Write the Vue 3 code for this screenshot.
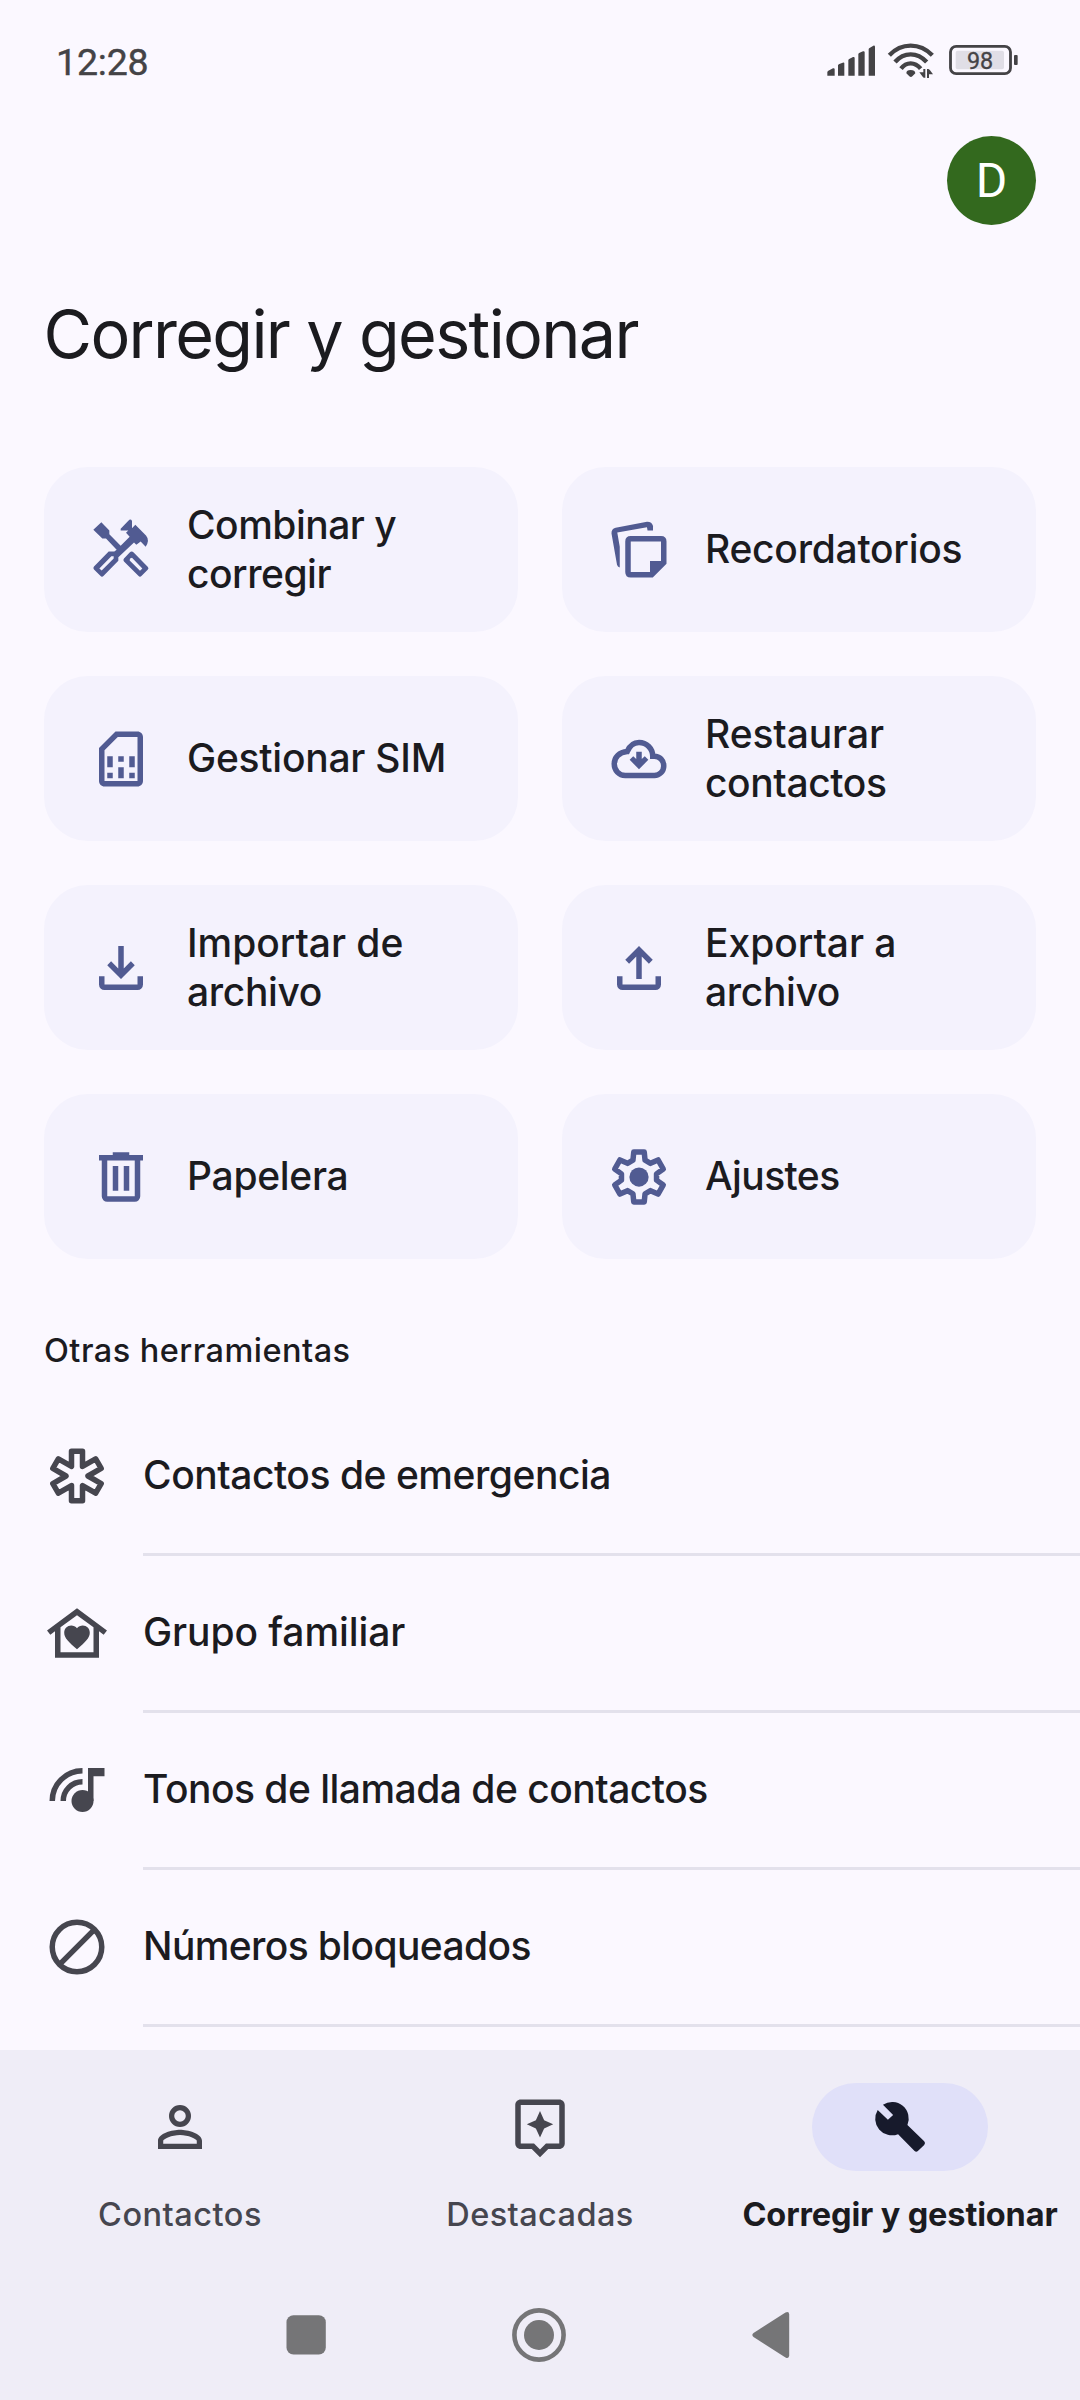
<script setup>
// Builds a closed six-fold outline around (12, 12) from the points of one arm.
function radial(points) {
  const out = []
  for (let i = 0; i < 6; i++) {
    const a = (i * Math.PI) / 3
    for (const [x, y] of points) {
      const px = 12 + x * Math.cos(a) - y * Math.sin(a)
      const py = 12 + x * Math.sin(a) + y * Math.cos(a)
      out.push(`${px.toFixed(2)} ${py.toFixed(2)}`)
    }
  }
  return `M${out.join('L')}Z`
}

const gear = radial([[-2.2, -6.1], [-1.9, -9.1], [1.9, -9.1], [2.2, -6.1]])
const asterisk = radial([[-2, -9], [2, -9], [2, -3.46]])

const cards = [
  { id: 'tools', lines: [['Combinar y', -0.5], ['corregir', -0.5]] },
  { id: 'notes', lines: [['Recordatorios', -0.27]] },
  { id: 'sim', lines: [['Gestionar SIM', -0.25]] },
  { id: 'cloud', lines: [['Restaurar', -0.1], ['contactos', -0.4]] },
  { id: 'download', lines: [['Importar de', -0.05], ['archivo', -0.35]] },
  { id: 'upload', lines: [['Exportar a', -0.05], ['archivo', -0.35]] },
  { id: 'trash', lines: [['Papelera', -0.3]] },
  { id: 'settings', lines: [['Ajustes', -0.6]] },
]

const tools = [
  { id: 'emergency', label: 'Contactos de emergencia', ls: -0.47 },
  { id: 'family', label: 'Grupo familiar', ls: -0.08 },
  { id: 'ringtone', label: 'Tonos de llamada de contactos', ls: -0.51 },
  { id: 'blocked', label: 'Números bloqueados', ls: -0.62 },
]

const tabs = [
  { id: 'person', label: 'Contactos', ls: 0.5 },
  { id: 'highlights', label: 'Destacadas', ls: 0.4 },
  { id: 'wrench', label: 'Corregir y gestionar', ls: -0.14, active: true },
]
</script>

<template>
  <div class="screen">
    <header class="status">
      <span class="clock">12:28</span>
      <svg class="status-icons" viewBox="141 60 576 120">
        <g fill="#444346">
          <path d="M142 167v-11q0-2 3-4l14-7q5-1 5 3v19zM174 167v-31q1-3 4-4l10-4q5-2 5 2v37zM205 167v-47q1-3 4-4l10-5q5-1 5 3v53zM235 167v-65q1-3 4-4l10-4q5-1 5 3v70zM266 167v-80q1-3 4-4l10-6q5-1 5 3v87z" />
          <path d="M379 160q0-10 13-10t14 10l-9 9q-4 4-9 0zM430 147h6v26h-4q-2 0-4-3l-10-13h12zM441 174v-27h4q3 1 5 4l9 12h-12v11z" />
          <rect x="702" y="105" width="11" height="30" rx="3" />
        </g>
        <g fill="none" stroke="#444346">
          <path d="M328 106Q355 77 392 77T457 106" stroke-width="13" />
          <path d="M345 126Q365 103 392 103T440 126" stroke-width="13" />
          <path d="M363 146Q375 130 392 130T422 146" stroke-width="13" />
          <rect x="511.500" y="79" width="180" height="82" rx="17" stroke-width="8.500" />
        </g>
        <rect x="527" y="92" width="145" height="56" rx="6" fill="#e0dee6" />
        <text x="600" y="146.500" class="level">98</text>
      </svg>
    </header>

    <div class="account"><div class="avatar">D</div></div>
    <h1 class="title">Corregir y gestionar</h1>

    <section class="grid">
      <div v-for="c in cards" :key="c.id" class="card">
        <svg v-if="c.id === 'tools'" class="icon" viewBox="174 199.500 198 198">
          <path fill-rule="evenodd" d="M190 238L214 215L238 240V251L272 286L299 259L288 247L295 240H272V235L298 208Q305 205 306 212V233L316 223L348 255Q360 269 347 289L332 273L319 283L312 276L265 320V331L221 376Q216 382 211 376L192 357Q188 352 192 348L236 303H253L260 298L228 264H217ZM208 354L215 360L251 324V317H244Z" />
          <path fill-rule="evenodd" d="M299 306Q305 300 311 306L353 349Q358 354 353 358L335 376Q330 382 325 376L282 333Q278 329 282 324ZM300 324L299 330L330 361L337 354L306 322Z" />
        </svg>
        <svg v-else-if="c.id === 'notes'" class="icon" viewBox="0 0 24 24">
          <path d="M2 6Q1.900 4.300 3.500 3.900L14.900 1.750Q16.700 1.700 17.100 3.300V4.900H15.100L14.900 3.750L4.100 5.650L5 10.800V18.400Q4.200 18.200 4 17.400Z" />
          <path fill-rule="evenodd" d="M9 6.900H20Q22 6.900 22 8.900V17L17 22H9Q7 22 7 20V8.900Q7 6.900 9 6.900ZM9 8.900V20H16V16H20V8.900Z" />
        </svg>
        <svg v-else-if="c.id === 'sim'" class="icon" viewBox="0 0 24 24">
          <path d="M18 2h-8L4 8v12c0 1.100.9 2 2 2h12c1.100 0 2-.9 2-2V4c0-1.100-.9-2-2-2zm0 18H6V8.830L10.830 4H18v16zM7 11h2v4H7zM11 11h2v2h-2zM15 11h2v4h-2zM7 17h2v2H7zM11 15h2v4h-2zM15 17h2v2h-2z" />
        </svg>
        <svg v-else-if="c.id === 'cloud'" class="icon" viewBox="0 0 24 24">
          <path fill="none" stroke="currentColor" stroke-width="2" d="M7 18C4.700 18 3 16.100 3 13.800C3 11.400 4.800 9.500 7.700 9.300C8.600 7.200 10 6 12 6C14.800 6 17 8.200 17 11H17.600C19.500 11 21 12.500 21 14.500C21 16.400 19.500 18 17.600 18Z" />
          <path d="M8.600 12.300L9.900 11L11 12V9.400H13V12L14.100 11L15.400 12.300L12 15.700Z" />
        </svg>
        <svg v-else-if="c.id === 'download'" class="icon" viewBox="0 0 24 24">
          <path d="M12 16l-5-5 1.400-1.450L11 12.150V4h2v8.150l2.600-2.600L17 11l-5 5Zm-6 4q-.825 0-1.412-.587T4 18v-3h2v3h12v-3h2v3q0 .825-.587 1.413T18 20H6Z" />
        </svg>
        <svg v-else-if="c.id === 'upload'" class="icon" viewBox="0 0 24 24">
          <path d="M11 16V7.850l-2.600 2.600L7 9l5-5 5 5-1.400 1.450-2.600-2.600V16h-2Zm-5 4q-.825 0-1.412-.587T4 18v-3h2v3h12v-3h2v3q0 .825-.587 1.413T18 20H6Z" />
        </svg>
        <svg v-else-if="c.id === 'trash'" class="icon" viewBox="0 0 24 24">
          <path d="M7 21q-.825 0-1.412-.587T5 19V6H4V4h5V3h6v1h5v2h-1v13q0 .825-.587 1.413T17 21H7ZM17 6H7v13h10V6ZM9 17h2V8H9v9Zm4 0h2V8h-2v9Z" />
        </svg>
        <svg v-else class="icon" viewBox="0 0 24 24">
          <path :d="gear" fill="none" stroke="currentColor" stroke-width="2" stroke-linejoin="round" />
          <circle cx="12" cy="12" r="3.500" />
        </svg>
        <div class="card-label">
          <div v-for="[text, ls] in c.lines" :key="text" :style="{ letterSpacing: ls + 'px' }">{{ text }}</div>
        </div>
      </div>
    </section>

    <h2 class="subtitle">Otras herramientas</h2>

    <ul class="list">
      <li v-for="t in tools" :key="t.id" class="row">
        <svg v-if="t.id === 'emergency'" class="icon" viewBox="0 0 24 24">
          <path :d="asterisk" fill="none" stroke="currentColor" stroke-width="2" stroke-linejoin="round" />
        </svg>
        <svg v-else-if="t.id === 'family'" class="icon" viewBox="0 0 24 24">
          <path fill-rule="evenodd" d="M12 3L1.100 11.100L2.300 12.600L4 11.400V21H20V11.400L21.700 12.600L22.900 11.100ZM6 19V9.900L12 5.500L18 9.900V19Z" />
          <path d="M12 17.900C9 15.300 7.350 13.800 7.350 11.900C7.350 10.400 8.500 9.300 9.900 9.300C10.700 9.300 11.500 9.700 12 10.300C12.500 9.700 13.300 9.300 14.100 9.300C15.500 9.300 16.650 10.400 16.650 11.900C16.650 13.800 15 15.300 12 17.900Z" />
        </svg>
        <svg v-else-if="t.id === 'ringtone'" class="icon" viewBox="0 0 24 24">
          <path fill="none" stroke="currentColor" stroke-width="2" d="M3 16A11 11 0 0 1 14 5M7 16A7 7 0 0 1 14 9" />
          <circle cx="14" cy="16" r="4" />
          <path d="M16 16V4H22V7H18V16Z" />
        </svg>
        <svg v-else class="icon" viewBox="0 0 24 24">
          <path fill="none" stroke="currentColor" stroke-width="2" d="M12 3A9 9 0 1 1 12 21A9 9 0 1 1 12 3ZM18.300 5.700L5.700 18.300" />
        </svg>
        <div class="row-label" :style="{ letterSpacing: t.ls + 'px' }">{{ t.label }}</div>
      </li>
    </ul>

    <footer class="bottom">
      <nav class="tabs">
        <div v-for="t in tabs" :key="t.id" class="tab" :class="{ active: t.active }">
          <div class="pill">
            <svg v-if="t.id === 'person'" class="icon" viewBox="0 0 24 24">
              <circle cx="12" cy="8" r="3.050" fill="none" stroke="currentColor" stroke-width="1.900" />
              <path d="M12 13c-2.670 0-8 1.340-8 4v3h16v-3c0-2.660-5.330-4-8-4zm6.100 5.100H5.900V17c0-.64 3.130-2.100 6.100-2.100s6.100 1.460 6.100 2.100v1.100z" />
            </svg>
            <svg v-else-if="t.id === 'highlights'" class="icon" viewBox="0 0 24 24">
              <path d="M19 2H5c-1.110 0-2 .9-2 2v14c0 1.100.89 2 2 2h4l3 3 3-3h4c1.100 0 2-.9 2-2V4c0-1.100-.9-2-2-2zm0 16h-4.830L12 20.170 9.830 18H5V4h14v14z" />
              <path d="M12 15.800L13.500 12.500L16.800 11L13.500 9.500L12 6.200L10.500 9.500L7.200 11L10.500 12.500Z" />
            </svg>
            <svg v-else class="icon" viewBox="0 0 24 24">
              <path d="M5.800 3.900L9.500 7.600L7.600 9.400L3.900 5.800A6.050 6.050 0 0 0 11.300 14.600L17.300 20.700Q17.900 21.300 18.500 20.700L20.800 18.500Q21.400 17.900 20.800 17.200L14.700 11.300A6.050 6.050 0 0 0 5.800 3.900Z" />
            </svg>
          </div>
          <div class="tab-label" :style="{ letterSpacing: t.ls + 'px' }">{{ t.label }}</div>
        </div>
      </nav>
      <div class="system">
        <svg width="40" height="54" viewBox="0 0 40 54"><rect x=".5" y="7.200" width="39.300" height="39.300" rx="7" /></svg>
        <svg width="54" height="54" viewBox="0 0 54 54">
          <circle cx="27" cy="27" r="24.600" fill="none" stroke="#757577" stroke-width="4.600" />
          <circle cx="27" cy="27" r="15" />
        </svg>
        <svg width="38" height="54" viewBox="0 0 38 54"><path d="M1.500 25L33.500 4.600Q37 3 37.200 6.500V47.500Q37 51 33.500 49.400L1.500 29Q-.8 27 1.500 25Z" /></svg>
      </div>
    </footer>
  </div>
</template>

<style>
body {
  background: #fbf8ff;
}
</style>

<style scoped>
.screen {
  width: 1080px;
  height: 2400px;
  display: flex;
  flex-direction: column;
  overflow: hidden;
  background: #fbf8ff;
  color: #1b1b1f;
  font-family: Inter, "Liberation Sans", sans-serif;
}
.status {
  height: 120px;
  flex: none;
  box-sizing: border-box;
  padding: 40px 61px 0 56px;
  display: flex;
  justify-content: space-between;
  align-items: flex-start;
}
.clock {
  font: 400 37.500px/44px Roboto, sans-serif;
  color: #444346;
  -webkit-text-stroke: 0.4px #444346;
  letter-spacing: -0.2px;
}
.status-icons {
  width: 192px;
  height: 40px;
  display: block;
}
.level {
  font: 400 70px Roboto, sans-serif;
  fill: #444346;
  stroke: #444346;
  stroke-width: 1px;
  text-anchor: middle;
}
.account {
  display: flex;
  justify-content: flex-end;
  padding: 16px 44px 0 0;
}
.avatar {
  width: 89px;
  height: 89px;
  border-radius: 50%;
  background: #33691e;
  color: #fff;
  font: 400 48px/90px Roboto, sans-serif;
  text-align: center;
}
.title {
  margin: 65px 0 0 43.500px;
  height: 89px;
  font-size: 66.500px;
  line-height: 88px;
  font-weight: 380;
  letter-spacing: -1.680px;
  white-space: nowrap;
}
.grid {
  flex: none;
  margin: 88px 44px 0;
  display: grid;
  grid-template-columns: 474px 474px;
  grid-auto-rows: 165px;
  gap: 44px;
}
.card {
  display: flex;
  align-items: center;
  gap: 33px;
  padding-left: 44px;
  border-radius: 44px;
  background: #f4f2fd;
}
.icon {
  width: 66px;
  height: 66px;
  flex: none;
  display: block;
  fill: currentColor;
}
.card .icon {
  color: #515b92;
}
.card-label,
.row-label {
  font-size: 39px;
  font-weight: 450;
  line-height: 49px;
  padding-bottom: 2px;
  white-space: nowrap;
}
.subtitle {
  flex: none;
  margin: 69px 0 0 44px;
  font-size: 32.500px;
  line-height: 46px;
  font-weight: 450;
  letter-spacing: 0.450px;
}
.list {
  flex: none;
  list-style: none;
  margin: 25px 0 0;
  padding: 0 0 0 44px;
}
.row {
  display: flex;
  align-items: center;
  gap: 33px;
  height: 157px;
}
.row .icon {
  color: #46464f;
  margin-bottom: 3px;
}
.row-label {
  flex: 1;
  box-sizing: border-box;
  height: 157px;
  padding: 51px 0 0;
  border-bottom: 3px solid #e3e1ec;
}
.bottom {
  flex: none;
  margin-top: 23px;
  height: 350px;
  background: #efedf7;
}
.tabs {
  display: flex;
  height: 231px;
}
.tab {
  width: 360px;
  display: flex;
  flex-direction: column;
  align-items: center;
  padding-top: 33px;
  color: #46464f;
}
.pill {
  width: 176px;
  height: 88px;
  border-radius: 44px;
  display: flex;
  align-items: center;
  justify-content: center;
}
.active .pill {
  background: #e0e0f9;
  color: #171a2c;
}
.tab-label {
  margin-top: 21px;
  font-size: 32.500px;
  line-height: 46px;
  font-weight: 450;
  white-space: nowrap;
}
.active .tab-label {
  color: #1b1b1f;
  font-weight: 680;
}
.system {
  display: flex;
  justify-content: center;
  gap: 186px;
  padding: 27px 4px 0 0;
  fill: #757577;
}
</style>
